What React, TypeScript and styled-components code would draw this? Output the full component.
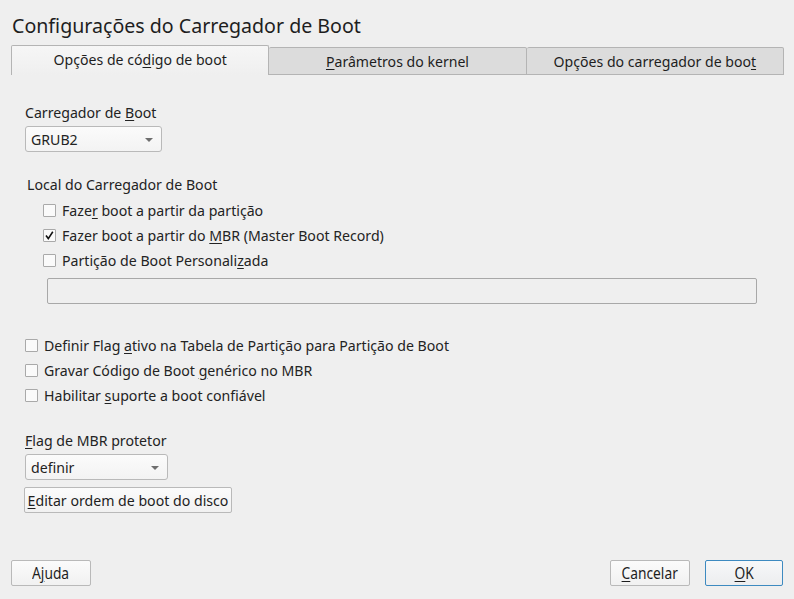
import React from "react";
import styled, { createGlobalStyle } from "styled-components";

const Global = createGlobalStyle`
  html, body { margin: 0; padding: 0; background: #efefef; }
  body { font-family: "Noto Sans", "DejaVu Sans", sans-serif; color: #232323; }
`;

const Window = styled.div`
  width: 794px;
  height: 599px;
  background: #efefef;
  display: flex;
  flex-direction: column;
  box-sizing: border-box;
  overflow: hidden;
`;

const Title = styled.h1`
  margin: 0;
  padding: 13px 0 0 12px;
  height: 45px;
  box-sizing: border-box;
  font-size: 19.6px;
  font-weight: 400;
  line-height: 26px;
  color: #1e1e1e;
`;

const TabBar = styled.div`
  display: flex;
  align-items: flex-end;
  margin: 0 10px 0 11px;
  height: 30px;
`;

const Tab = styled.div<{ $active?: boolean }>`
  flex: 1;
  box-sizing: border-box;
  height: ${(p) => (p.$active ? 30 : 28)}px;
  display: flex;
  align-items: center;
  justify-content: center;
  font-size: 14.1px;
  color: #1e1e1e;
  border: 1px solid #b4b4b4;
  border-bottom: ${(p) => (p.$active ? "none" : "1px solid #b4b4b4")};
  border-left: ${(p) => (p.$active ? "1px solid #b4b4b4" : "none")};
  border-radius: 2px 2px 0 0;
  background: ${(p) =>
    p.$active ? "linear-gradient(#f6f6f6, #efefef)" : "#dcdcdc"};
  padding-bottom: ${(p) => (p.$active ? 2 : 0)}px;
  &:first-child { border-left: 1px solid #b4b4b4; }
`;

const U = styled.span`
  text-decoration: underline;
  text-underline-offset: 2px;
`;

const Content = styled.div`
  flex: 1;
  display: flex;
  flex-direction: column;
  padding: 0 37px 0 25px;
  font-size: 14.15px;
`;

const Label = styled.div<{ $top: number; $indent?: number }>`
  line-height: 18px;
  margin-top: ${(p) => p.$top}px;
  padding-left: ${(p) => p.$indent ?? 0}px;
`;

const Combo = styled.div<{ $width: number; $top: number }>`
  width: ${(p) => p.$width}px;
  height: 26px;
  margin-top: ${(p) => p.$top}px;
  box-sizing: border-box;
  border: 1px solid #b9b9b9;
  border-radius: 3px;
  background: linear-gradient(#fbfbfb, #f3f3f3);
  display: flex;
  align-items: center;
  justify-content: space-between;
  padding: 0 8px 0 5px;
`;

const Arrow = styled.span`
  width: 0;
  height: 0;
  border-left: 4px solid transparent;
  border-right: 4px solid transparent;
  border-top: 4px solid #6e6e6e;
  margin-top: 1px;
`;

const CheckList = styled.div<{ $top: number; $indent: number }>`
  display: flex;
  flex-direction: column;
  margin-top: ${(p) => p.$top}px;
  padding-left: ${(p) => p.$indent}px;
`;

const CheckRow = styled.div`
  height: 25px;
  display: flex;
  align-items: center;
  gap: 6px;
`;

const Box = styled.span`
  width: 13px;
  height: 13px;
  box-sizing: border-box;
  border: 1px solid #a9a9a9;
  border-radius: 1px;
  background: #fafafa;
  display: flex;
  align-items: center;
  justify-content: center;
  flex: none;
`;

const TextField = styled.div`
  margin: 5px 0 0 22px;
  height: 26px;
  box-sizing: border-box;
  border: 1px solid #a8a8a8;
  border-radius: 2px;
  background: #efefef;
`;

const Button = styled.div<{ $width: number; $default?: boolean }>`
  width: ${(p) => p.$width}px;
  height: 26px;
  box-sizing: border-box;
  border: 1px solid ${(p) => (p.$default ? "#3d8ac0" : "#b9b9b9")};
  border-radius: 2px;
  background: ${(p) =>
    p.$default ? "linear-gradient(#f7f8f9, #ecedef)" : "linear-gradient(#fbfbfb, #f1f1f1)"};
  display: flex;
  align-items: center;
  justify-content: center;
  color: #1e1e1e;
`;

const WideButton = styled(Button)`
  margin: 7px 0 0 -1px;
`;

const Narrow = styled.span`
  display: inline-block;
  font-size: 16px;
  transform: scaleX(0.86);
`;

const Footer = styled.div`
  display: flex;
  align-items: center;
  padding: 0 11px 13px 11px;
  gap: 15px;
`;

const Spacer = styled.div`
  flex: 1;
`;

const Check = () => (
  <svg width="11" height="11" viewBox="0 0 11 11">
    <path d="M2 5.5 L4.3 8.6 L8.8 1.8" fill="none" stroke="#111" strokeWidth="1.6" />
  </svg>
);

const Item: React.FC<{ checked?: boolean; children: React.ReactNode }> = ({ checked, children }) => (
  <CheckRow>
    <Box>{checked && <Check />}</Box>
    <span>{children}</span>
  </CheckRow>
);

export default function App() {
  return (
    <Window>
      <Global />
      <Title>Configurações do Carregador de Boot</Title>
      <TabBar>
        <Tab $active>
          Opções de có<U>d</U>igo de boot
        </Tab>
        <Tab>
          <U>P</U>arâmetros do kernel
        </Tab>
        <Tab>
          Opções do carregador de boo<U>t</U>
        </Tab>
      </TabBar>
      <Content>
        <Label $top={29}>
          Carregador de <U>B</U>oot
        </Label>
        <Combo $width={137} $top={4}>
          <span>GRUB2</span>
          <Arrow />
        </Combo>
        <Label $top={24} $indent={2}>
          Local do Carregador de Boot
        </Label>
        <CheckList $top={4} $indent={18}>
          <Item>
            Faze<U>r</U> boot a partir da partição
          </Item>
          <Item checked>
            Fazer boot a partir do <U>M</U>BR (Master Boot Record)
          </Item>
          <Item>
            Partição de Boot Personali<U>z</U>ada
          </Item>
        </CheckList>
        <TextField />
        <CheckList $top={29} $indent={0}>
          <Item>
            Definir Flag <U>a</U>tivo na Tabela de Partição para Partição de Boot
          </Item>
          <Item>
            Gravar Código de Boot <U>g</U>enérico no MBR
          </Item>
          <Item>
            Habilitar <U>s</U>uporte a boot confiável
          </Item>
        </CheckList>
        <Label $top={24}>
          <U>F</U>lag de MBR protetor
        </Label>
        <Combo $width={143} $top={4}>
          <span>definir</span>
          <Arrow />
        </Combo>
        <WideButton $width={208}>
          <span>
            <U>E</U>ditar ordem de boot do disco
          </span>
        </WideButton>
      </Content>
      <Footer>
        <Button $width={80}>
          <Narrow>
            A<U>j</U>uda
          </Narrow>
        </Button>
        <Spacer />
        <Button $width={80}>
          <Narrow>
            <U>C</U>ancelar
          </Narrow>
        </Button>
        <Button $width={78} $default>
          <Narrow>
            <U>O</U>K
          </Narrow>
        </Button>
      </Footer>
    </Window>
  );
}
